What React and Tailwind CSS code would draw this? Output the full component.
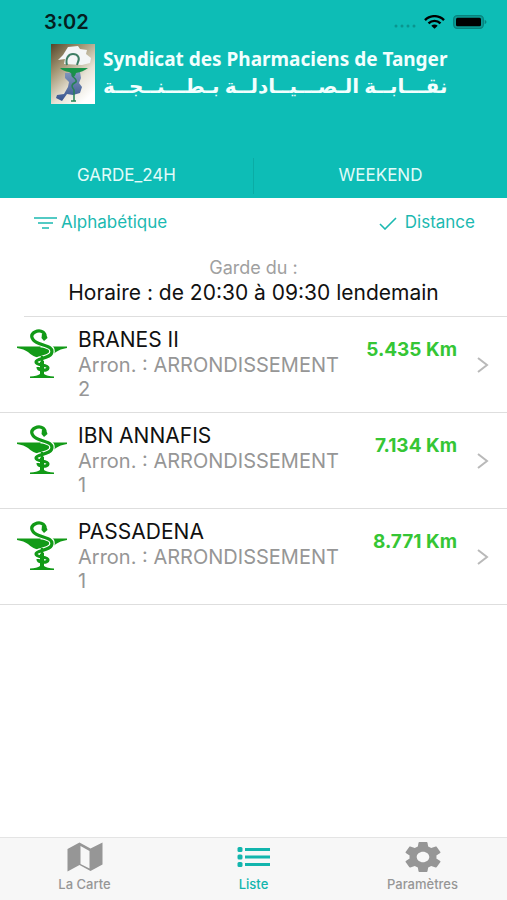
import React from "react";

const pharmacies = [
  { name: "BRANES II", district: "Arron. : ARRONDISSEMENT 2", distance: "5.435 Km" },
  { name: "IBN ANNAFIS", district: "Arron. : ARRONDISSEMENT 1", distance: "7.134 Km" },
  { name: "PASSADENA", district: "Arron. : ARRONDISSEMENT 1", distance: "8.771 Km" },
];

function WifiIcon() {
  return (
    <svg width="21" height="14" viewBox="0 0 21 14" fill="none" stroke="#000" strokeWidth="2.4" aria-hidden="true">
      <path d="M1 5.2C6.200-.2 14.800-.2 20 5.200" />
      <path d="M4.500 8.400C8 5 13 5 16.500 8.400" />
      <path d="M7.300 10.700C9.200 9 11.800 9 13.700 10.700L10.500 13.800Z" fill="#000" stroke="none" />
    </svg>
  );
}

function BatteryIcon() {
  return (
    <svg width="34" height="14" viewBox="0 0 34 14" aria-hidden="true">
      <rect x="0.700" y="0.700" width="29.600" height="12.600" rx="3.500" fill="#0b9c96" stroke="#08827d" strokeWidth="1.300" />
      <rect x="3" y="2.700" width="25" height="8.600" rx="1.500" fill="#000" />
      <path d="M31.600 4.800Q33.500 5.600 33.500 7T31.600 9.200Z" fill="#08827d" />
    </svg>
  );
}

function Logo() {
  return (
    <svg width="44" height="60" viewBox="0 0 44 60" className="shrink-0" role="img" aria-label="Logo">
      <defs>
        <linearGradient id="logoBg" x1="0" y1="0" x2="0.700" y2="1">
          <stop offset="0" stopColor="#54452a" />
          <stop offset="0.350" stopColor="#a39674" />
          <stop offset="0.700" stopColor="#e8e3d6" />
          <stop offset="1" stopColor="#fff" />
        </linearGradient>
        <linearGradient id="logoBody" x1="0" y1="0" x2="0" y2="1">
          <stop offset="0" stopColor="#8196bd" />
          <stop offset="1" stopColor="#38558f" />
        </linearGradient>
      </defs>
      <rect width="44" height="60" fill="url(#logoBg)" />
      <path d="M17 3L27 2L29 5L36 6L35 10L40 14L39 19L31 21L13 20L14 15L7 16L12 11Z" fill="#f4f5f6" />
      <path d="M14 29L29 28L30 34L28 39L31 43L29 49L22 51L16 50L11 57L5 54L6 51L13 50L17 43L18 38L14 34Z" fill="url(#logoBody)" />
      <path d="M16 21C14 14 18 10 22 10C27 10 29 14 27 18L26 21" fill="none" stroke="#3e7d64" strokeWidth="2" />
      <path d="M9 24L37 24Q32 28 25 29Q24 33 22 33Q21 29 18 28Q12 27 9 24Z" fill="#18944a" />
      <path d="M22 29C18 33 27 34 25 38C19 41 21 43 23 46L23 57M20 57H25" fill="none" stroke="#268254" strokeWidth="1.500" />
    </svg>
  );
}

function HygieiaIcon() {
  return (
    <svg width="50" height="50" viewBox="0 0 50 50" className="shrink-0" fill="none" aria-hidden="true">
      <path d="M0 17.500H50V19Q43 20 39 23Q33 28 27 29V45Q30 47 37 47.500V49H13V47.500Q20 47 23 45V29Q16 28 11 23Q7 20 0 19Z" fill="#129a17" />
      <path d="M24 15.500C30 17 37 18 34.500 24.500C32 30 19 29 19 33" stroke="#fff" strokeWidth="5.500" />
      <path d="M28 6C27 2 22 1 18 3C12 6 15 12 22 14.500C29 17 37 18 34.500 24.500C32 30 19 29 19 33C19 37 31 35 31 39C31 42 21 42 21 38" stroke="#129a17" strokeWidth="3.200" />
      <path d="M25 4.500L29 4.500L30.500 9L27 12L24.500 9Z" fill="#129a17" />
      <path d="M25 27V47" stroke="#129a17" strokeWidth="2.500" />
    </svg>
  );
}

function TabItem({ label, active, children }) {
  return (
    <button
      type="button"
      className={
        active
          ? "flex flex-1 flex-col items-center pt-1 text-[#12b5ad]"
          : "flex flex-1 flex-col items-center pt-1 text-[#969696]"
      }
    >
      {children}
      <span className="mt-1 text-[13px] font-medium leading-4">{label}</span>
    </button>
  );
}

export default function App() {
  return (
    <div className="flex min-h-screen flex-col bg-white font-['Inter','Liberation_Sans',sans-serif]">
      <header className="bg-[#0dbdb6]">
        <div className="flex h-11 items-center justify-between pl-11 pr-5">
          <span className="text-xl font-semibold text-[#05201f]">3:02</span>
          <div className="flex items-center gap-2">
            <svg width="23" height="4" viewBox="0 0 23 4" fill="#0a958f" className="mt-2" aria-hidden="true">
              <circle cx="3" cy="2" r="1.500" />
              <circle cx="9" cy="2" r="1.500" />
              <circle cx="15" cy="2" r="1.500" />
              <circle cx="21" cy="2" r="1.500" />
            </svg>
            <WifiIcon />
            <BatteryIcon />
          </div>
        </div>
        <div className="flex gap-2 pl-[51px] text-[#f2fffe]">
          <Logo />
          <h1 className="whitespace-nowrap font-['Noto_Sans','DejaVu_Sans',sans-serif] font-bold">
            <span className="block text-[19px] leading-[30px]">Syndicat des Pharmaciens de Tanger</span>
            <span lang="ar" dir="rtl" className="block text-right text-xl leading-6">
              نقـــابــة الـصـــيــادلــة بـطـــنــجــة
            </span>
          </h1>
        </div>
        <nav className="mt-[50px] flex h-11 text-[17px] text-[#e2fbf9]">
          <button type="button" className="my-1 flex-1 border-r border-[#0aaca5]">GARDE_24H</button>
          <button type="button" className="flex-1">WEEKEND</button>
        </nav>
      </header>

      <main className="flex-1">
        <div className="flex h-[50px] items-center justify-between pl-[34px] pr-8 text-[17px] text-[#1bb9b1]">
          <button type="button" className="flex items-center gap-1">
            <svg width="23" height="12" viewBox="0 0 23 12" fill="none" stroke="currentColor" strokeWidth="1.500" aria-hidden="true">
              <path d="M0 1H23M4 6H19M8 11H15" />
            </svg>
            Alphabétique
          </button>
          <button type="button" className="flex items-center gap-2">
            <svg width="18" height="13" viewBox="0 0 18 13" fill="none" stroke="currentColor" strokeWidth="1.600" aria-hidden="true">
              <path d="M1 7L6 12L17 1" />
            </svg>
            Distance
          </button>
        </div>

        <div className="ml-6 border-b border-[#dedede] pb-[10px] pt-2 text-center">
          <div className="-ml-6">
            <p className="text-lg leading-6 text-[#a0a0a0]">Garde du :</p>
            <p className="text-[21px] leading-[26px] text-[#111]">Horaire : de 20:30 à 09:30 lendemain</p>
          </div>
        </div>

        <ul>
          {pharmacies.map((p) => (
            <li key={p.name} className="border-b border-[#dedede]">
              <a href="#" className="flex h-[95px] pl-[17px] pr-[18px]">
                <div className="pt-3">
                  <HygieiaIcon />
                </div>
                <div className="ml-[11px] w-[270px] pt-[10px]">
                  <p className="text-[21px] leading-[26px] text-[#111]">{p.name}</p>
                  <p className="text-xl leading-6 text-[#969696]">{p.district}</p>
                </div>
                <span className="ml-auto whitespace-nowrap pt-5 text-[19px] font-bold leading-[26px] text-[#35c635]">
                  {p.distance}
                </span>
                <svg width="12" height="16" viewBox="0 0 12 16" fill="none" stroke="#b9b9b9" strokeWidth="2" className="ml-5 shrink-0 self-center" aria-hidden="true">
                  <path d="M1 1L10 8L1 15" />
                </svg>
              </a>
            </li>
          ))}
        </ul>
      </main>

      <footer className="flex h-[63px] border-t border-[#e4e4e4] bg-[#f7f7f7]">
        <TabItem label="La Carte">
          <svg width="36" height="30" viewBox="0 1 36 30" fill="currentColor" aria-hidden="true">
            <path fillRule="evenodd" d="M0.500 8L12.500 1.500L23.500 7.500L35.500 1.500V23.500L23.500 30L12.500 24L0.500 30.500ZM13.500 5V23L22.500 27.500V10Z" />
          </svg>
        </TabItem>
        <TabItem label="Liste" active>
          <svg width="34" height="30" viewBox="0 1 34 30" fill="currentColor" aria-hidden="true">
            <rect x="0.500" y="6" width="5" height="5" rx="1.500" />
            <rect x="0.500" y="13.500" width="5" height="5" rx="1.500" />
            <rect x="0.500" y="21" width="5" height="5" rx="1.500" />
            <rect x="8" y="7" width="25" height="3" />
            <rect x="8" y="14.500" width="25" height="3" />
            <rect x="8" y="22" width="25" height="3" />
          </svg>
        </TabItem>
        <TabItem label="Paramètres">
          <svg width="36" height="30" viewBox="2 2 20 20" preserveAspectRatio="none" fill="currentColor" aria-hidden="true">
            <path d="M19.430 12.980c.04-.32.07-.64.07-.98s-.03-.66-.07-.98l2.110-1.650c.19-.15.24-.42.12-.64l-2-3.460c-.12-.22-.39-.3-.61-.22l-2.490 1c-.52-.4-1.080-.73-1.690-.98l-.38-2.650C14.460 2.180 14.250 2 14 2h-4c-.25 0-.46.18-.49.42l-.38 2.650c-.61.25-1.170.59-1.690.98l-2.490-1c-.23-.09-.49 0-.61.22l-2 3.460c-.13.22-.07.49.12.64l2.110 1.650c-.04.32-.07.65-.07.98s.03.66.07.98l-2.110 1.650c-.19.15-.24.42-.12.64l2 3.460c.12.22.39.3.61.22l2.490-1c.52.4 1.080.73 1.690.98l.38 2.650c.03.24.24.42.49.42h4c.25 0 .46-.18.49-.42l.38-2.650c.61-.25 1.170-.59 1.690-.98l2.490 1c.23.09.49 0 .61-.22l2-3.460c.12-.22.07-.49-.12-.64l-2.110-1.650zM12 15.500c-1.930 0-3.500-1.570-3.500-3.500s1.570-3.500 3.500-3.500 3.500 1.570 3.500 3.500-1.570 3.500-3.500 3.500z" />
          </svg>
        </TabItem>
      </footer>
    </div>
  );
}
